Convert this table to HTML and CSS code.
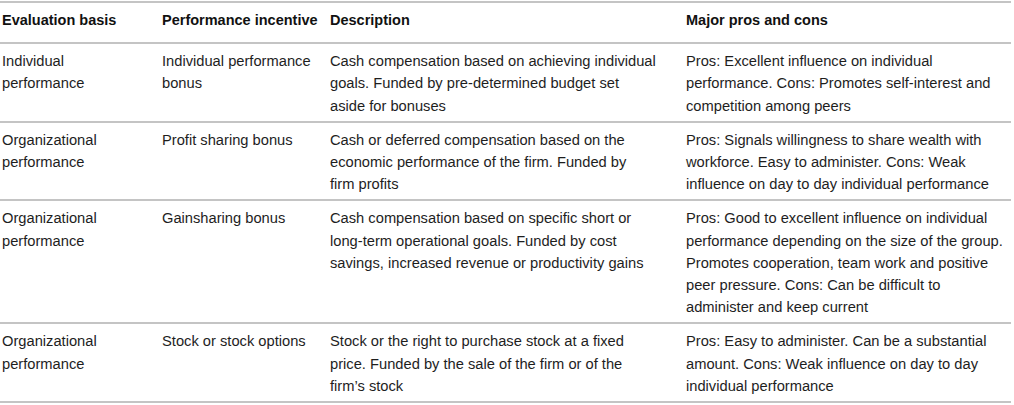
FILE: index.html
```html
<!DOCTYPE html>
<html lang="en">
<head>
<meta charset="utf-8">
<title>Performance incentives</title>
<link rel="stylesheet" href="styles.css">
</head>
<body>
<table class="incentives">
  <colgroup>
    <col class="c1"><col class="c2"><col class="c3"><col class="c4">
  </colgroup>
  <thead>
    <tr>
      <th>Evaluation basis</th>
      <th>Performance incentive</th>
      <th>Description</th>
      <th>Major pros and cons</th>
    </tr>
  </thead>
  <tbody>
    <tr>
      <td>Individual<br>performance</td>
      <td>Individual performance<br>bonus</td>
      <td>Cash compensation based on achieving individual<br>goals. Funded by pre-determined budget set<br>aside for bonuses</td>
      <td>Pros: Excellent influence on individual<br>performance. Cons: Promotes self-interest and<br>competition among peers</td>
    </tr>
    <tr>
      <td>Organizational<br>performance</td>
      <td>Profit sharing bonus</td>
      <td>Cash or deferred compensation based on the<br>economic performance of the firm. Funded by<br>firm profits</td>
      <td>Pros: Signals willingness to share wealth with<br>workforce. Easy to administer. Cons: Weak<br>influence on day to day individual performance</td>
    </tr>
    <tr>
      <td>Organizational<br>performance</td>
      <td>Gainsharing bonus</td>
      <td>Cash compensation based on specific short or<br>long-term operational goals. Funded by cost<br>savings, increased revenue or productivity gains</td>
      <td>Pros: Good to excellent influence on individual<br>performance depending on the size of the group.<br>Promotes cooperation, team work and positive<br>peer pressure. Cons: Can be difficult to<br>administer and keep current</td>
    </tr>
    <tr>
      <td>Organizational<br>performance</td>
      <td>Stock or stock options</td>
      <td>Stock or the right to purchase stock at a fixed<br>price. Funded by the sale of the firm or of the<br>firm’s stock</td>
      <td>Pros: Easy to administer. Can be a substantial<br>amount. Cons: Weak influence on day to day<br>individual performance</td>
    </tr>
  </tbody>
</table>
</body>
</html>
```

FILE: styles.css
```css
html, body {
  margin: 0;
  padding: 0;
  background: #ffffff;
}

body {
  padding-top: 1px;
  font-family: "Liberation Sans", Arial, sans-serif;
  font-size: 14.7px;
  color: #1e1e1e;
}

.incentives {
  width: 1011px;
  border-collapse: collapse;
  table-layout: fixed;
  border-top: 2px solid #c4c4c4;
  border-bottom: 2px solid #c4c4c4;
}

.c1 { width: 160px; }
.c2 { width: 168px; }
.c3 { width: 356px; }
.c4 { width: 327px; }

.incentives th,
.incentives td {
  text-align: left;
  vertical-align: top;
  white-space: nowrap;
  line-height: 22.2px;
  padding: 6px 0 4px 2px;
}

.incentives th {
  font-weight: bold;
  font-size: 14.5px;
  padding-top: 6px;
  padding-bottom: 11px;
  color: #111111;
}

.incentives tbody td {
  border-top: 2px solid #c4c4c4;
}
```
